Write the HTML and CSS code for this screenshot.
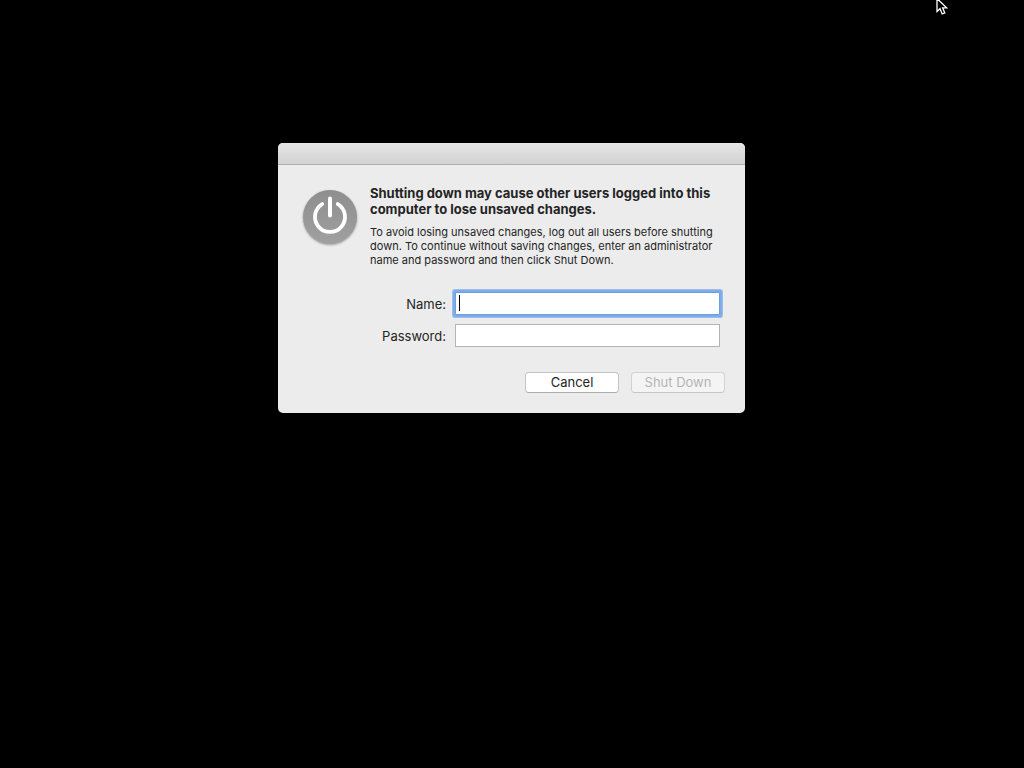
FILE: index.html
```html
<!DOCTYPE html>
<html lang="en">
<head>
<meta charset="utf-8">
<title>Shut Down</title>
<link rel="stylesheet" href="styles.css">
</head>
<body>
<main class="screen">
  <form class="dialog" role="dialog" aria-labelledby="dialog-title">
    <div class="titlebar"></div>
    <div class="content">
      <svg class="power" viewBox="0 0 60 60" aria-hidden="true">
        <defs>
          <linearGradient id="disc" x1="0" y1="0" x2="0" y2="1">
            <stop offset="0" stop-color="#8e8e8e"/>
            <stop offset="1" stop-color="#a0a0a0"/>
          </linearGradient>
        </defs>
        <circle class="power-disc" cx="30" cy="30" r="27" fill="url(#disc)"/>
        <path d="M22.2 17.1A15 15 0 1 0 37.8 17.1" fill="none" stroke="#fff" stroke-width="3.8" stroke-linecap="round"/>
        <path d="M30 11.5V28.5" stroke="#fff" stroke-width="4" stroke-linecap="round"/>
      </svg>
      <div class="message">
        <h1 class="title" id="dialog-title">Shutting down may cause other users logged into this computer to lose unsaved changes.</h1>
        <p class="detail">To avoid losing unsaved changes, log out all users before shutting down. To continue without saving changes, enter an administrator name and password and then click Shut Down.</p>
      </div>
    </div>
    <div class="fields">
      <label class="label" for="name">Name:</label>
      <div class="field">
        <input class="input input-focused" id="name" type="text" autocomplete="off">
        <span class="caret"></span>
      </div>
      <label class="label" for="password">Password:</label>
      <div class="field">
        <input class="input" id="password" type="password" autocomplete="off">
      </div>
    </div>
    <div class="actions">
      <button class="button" type="button">Cancel</button>
      <button class="button" type="submit" disabled>Shut Down</button>
    </div>
  </form>
  <svg class="pointer" viewBox="0 0 12 18" aria-hidden="true">
    <path d="M1 .5V13.5L4 10.7L6.2 16L8.8 14.9L6.6 9.8H10.6Z" fill="#000" stroke="#fff" stroke-width="1.3"/>
  </svg>
</main>
</body>
</html>
```
FILE: styles.css
```css
* {
  box-sizing: border-box;
}

body {
  margin: 0;
  background: #000;
  color: #242424;
  font-family: Inter, "Liberation Sans", sans-serif;
  font-size: 13px;
  line-height: 16px;
}

.screen {
  position: relative;
  display: flex;
  justify-content: center;
  align-items: flex-start;
  min-height: 100vh;
  padding: 143px 16px 16px 15px;
  overflow: hidden;
}

.dialog {
  width: 100%;
  max-width: 467px;
  background: #ececec;
  border-radius: 5px;
  overflow: hidden;
}

.titlebar {
  height: 22px;
  background: linear-gradient(#e6e6e6, #d2d2d2);
  border-bottom: 1px solid #adadad;
}

.content {
  display: flex;
  align-items: center;
  gap: 10px;
  padding: 20px 24px 0 22px;
}

.power {
  flex: none;
  width: 60px;
  height: 60px;
  margin-bottom: 18px;
  overflow: visible;
}

.power-disc {
  filter: drop-shadow(0 1px 1px rgba(0, 0, 0, 0.35));
}

.title {
  margin: 0;
  font-size: 13px;
  font-weight: 700;
  line-height: 16px;
}

.detail {
  margin: 8px 0 0;
  font-size: 11px;
  line-height: 14px;
}

.fields {
  display: grid;
  grid-template-columns: 168px 1fr;
  gap: 9px;
  align-items: center;
  padding: 25px 25px 0 0;
}

.label {
  text-align: right;
}

.field {
  position: relative;
  display: flex;
}

.input {
  width: 100%;
  height: 23px;
  padding: 0 4px;
  border: 1px solid #b4b4b4;
  border-radius: 0;
  outline: none;
  background: #fff;
  font: inherit;
}

.input-focused {
  border-color: #6c9fdc;
  box-shadow: 0 0 0 2px #7eace8, 0 0 0 3px #9dbdea;
  border-radius: 1px;
}

.caret {
  position: absolute;
  top: 3px;
  left: 4px;
  width: 1px;
  height: 16px;
  background: #000;
}

.actions {
  display: flex;
  justify-content: flex-end;
  gap: 12px;
  padding: 25px 20px 20px;
}

.button {
  width: 94px;
  height: 21px;
  padding: 0 0 1px;
  border: 1px solid #c4c4c4;
  border-bottom-color: #acacac;
  border-radius: 4px;
  background: #fff;
  color: #242424;
  font: inherit;
}

.button:disabled {
  border-color: #d2d2d2;
  border-bottom-color: #c6c6c6;
  background: #f4f4f4;
  color: #b4b4b4;
}

.pointer {
  position: absolute;
  top: -2px;
  right: 76px;
  width: 12px;
  height: 18px;
}
```
